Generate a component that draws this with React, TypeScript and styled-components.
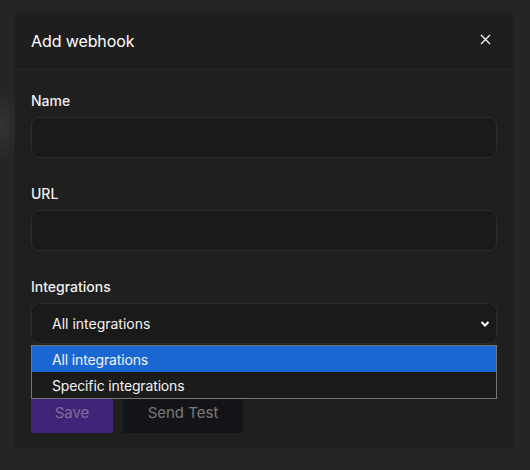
import React from "react";
import styled, { createGlobalStyle } from "styled-components";

const Global = createGlobalStyle`
  html, body { margin: 0; padding: 0; }
  body {
    background: #252324;
    font-family: Inter, "Noto Sans", Roboto, sans-serif;
    width: 530px;
    height: 470px;
    overflow: hidden;
  }
`;

const Backdrop = styled.div`
  width: 530px;
  height: 470px;
  padding: 13px 0 0 15px;
  box-sizing: border-box;
  background:
    radial-gradient(ellipse 22px 40px at 2px 125px, rgba(60, 58, 58, 0.7), rgba(37, 35, 36, 0) 100%),
    #252324;
`;

const Modal = styled.div`
  width: 498px;
  height: 435px;
  background: #1f1f1f;
  display: flex;
  flex-direction: column;
`;

const Header = styled.div`
  height: 57px;
  box-sizing: border-box;
  padding: 0 22px 0 16px;
  display: flex;
  align-items: center;
  justify-content: space-between;
  border-bottom: 1px solid #262626;
  background: #1e1e1e;
`;

const Title = styled.h2`
  margin: 0;
  font-size: 16px;
  font-weight: 400;
  color: #ffffff;
  letter-spacing: -0.1px;
`;

const CloseButton = styled.button`
  background: none;
  border: none;
  padding: 0;
  width: 12px;
  height: 12px;
  display: flex;
  align-items: center;
  justify-content: center;
  cursor: pointer;
  margin-top: -3px;
`;

const Body = styled.div`
  position: relative;
  padding: 21px 16px 15px;
  display: flex;
  flex-direction: column;
  gap: 26px;
`;

const Field = styled.div`
  display: flex;
  flex-direction: column;
  gap: 6px;
`;

const Label = styled.label`
  font-size: 14px;
  line-height: 20px;
  font-weight: 500;
  color: #f0f0f0;
`;

const Input = styled.div`
  height: 41px;
  box-sizing: border-box;
  border: 1px solid #2c2c2c;
  border-radius: 8px;
  background: #1a1a1a;
`;

const Select = styled(Input)`
  display: flex;
  align-items: center;
  justify-content: space-between;
  padding: 0 6px 0 20px;
  font-size: 14px;
  color: #f4f4f4;
`;

const Dropdown = styled.ul`
  position: absolute;
  left: 16px;
  top: 275px;
  width: 466px;
  margin: 0;
  padding: 0;
  list-style: none;
  border: 1px solid #767676;
  background: #1b1b1b;
  box-sizing: border-box;
  z-index: 2;
`;

const Option = styled.li<{ $active?: boolean }>`
  height: 26px;
  display: flex;
  align-items: center;
  padding-left: 20px;
  font-size: 14px;
  letter-spacing: -0.15px;
  color: #f4f4f4;
  background: ${(p) => (p.$active ? "#1a67d3" : "#1b1b1b")};
`;

const Actions = styled.div`
  display: flex;
  gap: 10px;
  margin-top: 22px;
`;

const Button = styled.button<{ $variant: "primary" | "secondary" }>`
  height: 41px;
  border: none;
  font-family: inherit;
  font-size: 15px;
  padding: 0;
  width: ${(p) => (p.$variant === "primary" ? "82px" : "120px")};
  background: ${(p) => (p.$variant === "primary" ? "#42237a" : "#141418")};
  color: ${(p) => (p.$variant === "primary" ? "#7c6e96" : "#7a7a7c")};
`;

export default function App() {
  return (
    <>
      <Global />
      <Backdrop>
        <Modal>
          <Header>
            <Title>Add webhook</Title>
            <CloseButton aria-label="Close">
              <svg width="11" height="11" viewBox="0 0 11 11">
                <path d="M1 1 L10 10 M10 1 L1 10" stroke="#f2f2f2" strokeWidth="1.4" />
              </svg>
            </CloseButton>
          </Header>
          <Body>
            <Field>
              <Label>Name</Label>
              <Input />
            </Field>
            <Field>
              <Label>URL</Label>
              <Input />
            </Field>
            <Field>
              <Label>Integrations</Label>
              <Select>
                <span>All integrations</span>
                <svg width="10" height="8" viewBox="0 0 10 8">
                  <polyline points="1.5,2 5,5.5 8.5,2" fill="none" stroke="#ffffff" strokeWidth="2" />
                </svg>
              </Select>
            </Field>
            <Actions>
              <Button $variant="primary">Save</Button>
              <Button $variant="secondary">Send Test</Button>
            </Actions>
            <Dropdown>
              <Option $active>All integrations</Option>
              <Option>Specific integrations</Option>
            </Dropdown>
          </Body>
        </Modal>
      </Backdrop>
    </>
  );
}
